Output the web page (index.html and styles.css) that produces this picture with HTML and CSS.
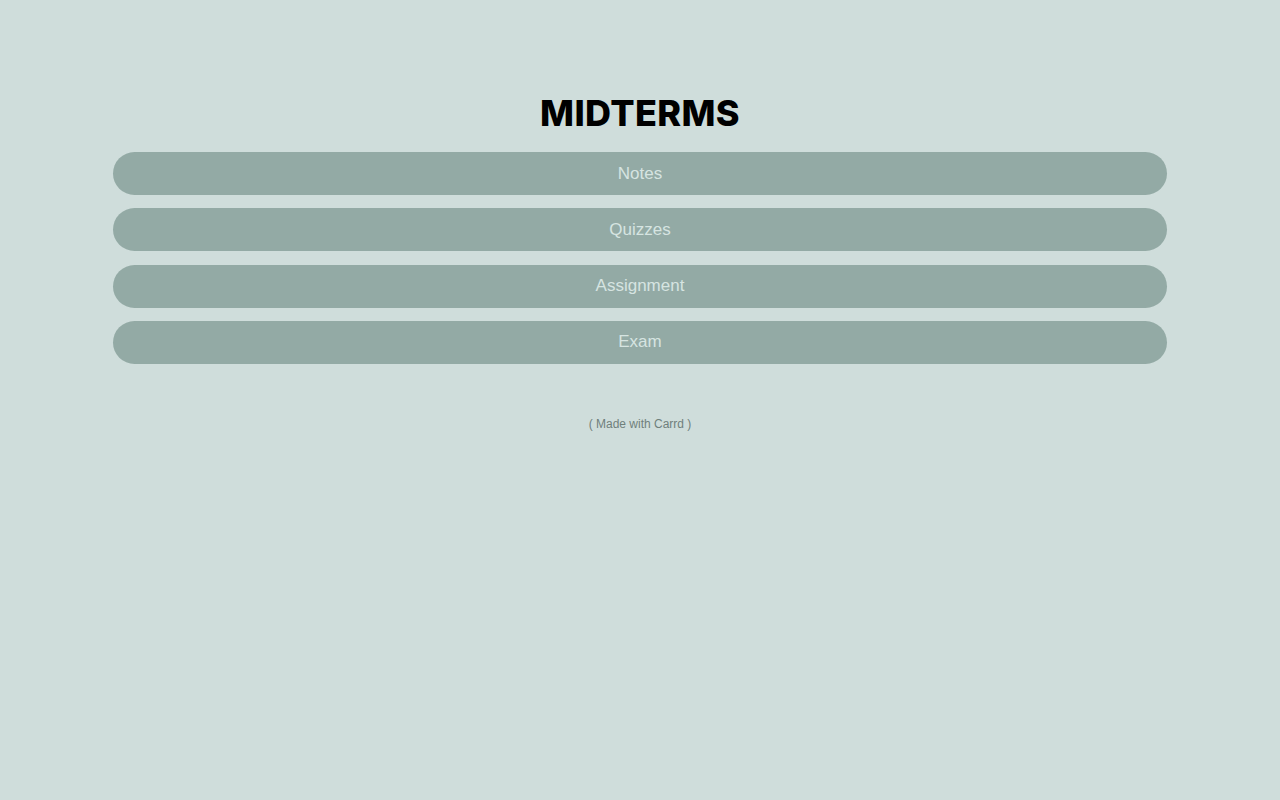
FILE: index.html
```html
<!DOCTYPE html>
<html lang="en">
<head>
<meta charset="utf-8">
<title>MIDTERMS</title>
<link rel="stylesheet" href="styles.css">
</head>
<body>
<main class="page">
  <h1 class="title">MIDTERMS</h1>
  <nav class="buttons">
    <a class="btn" href="#">Notes</a>
    <a class="btn" href="#">Quizzes</a>
    <a class="btn" href="#">Assignment</a>
    <a class="btn" href="#">Exam</a>
  </nav>
  <p class="credit">( Made with Carrd )</p>
</main>
</body>
</html>
```

FILE: styles.css
```css
html, body {
  margin: 0;
  padding: 0;
  background: #cfdddb;
  height: 100%;
}
body {
  font-family: "Liberation Sans", Arial, sans-serif;
}
.page {
  display: flex;
  flex-direction: column;
  align-items: center;
  padding: 92px 113px 0;
}
.title {
  margin: 0;
  font-family: "Inter", "Open Sans", sans-serif;
  font-weight: 800;
  font-size: 36px;
  line-height: 42px;
  letter-spacing: 0.01em;
  color: #000;
}
.buttons {
  margin-top: 18px;
  width: 100%;
  display: flex;
  flex-direction: column;
  gap: 13.3px;
}
.btn {
  display: flex;
  align-items: center;
  justify-content: center;
  height: 43px;
  border-radius: 22px;
  background: #93aaa5;
  color: #d6e4e1;
  font-size: 17px;
  text-decoration: none;
}
.credit {
  margin: 53px 0 0;
  font-size: 12px;
  line-height: 14px;
  color: #6f807c;
}
```
